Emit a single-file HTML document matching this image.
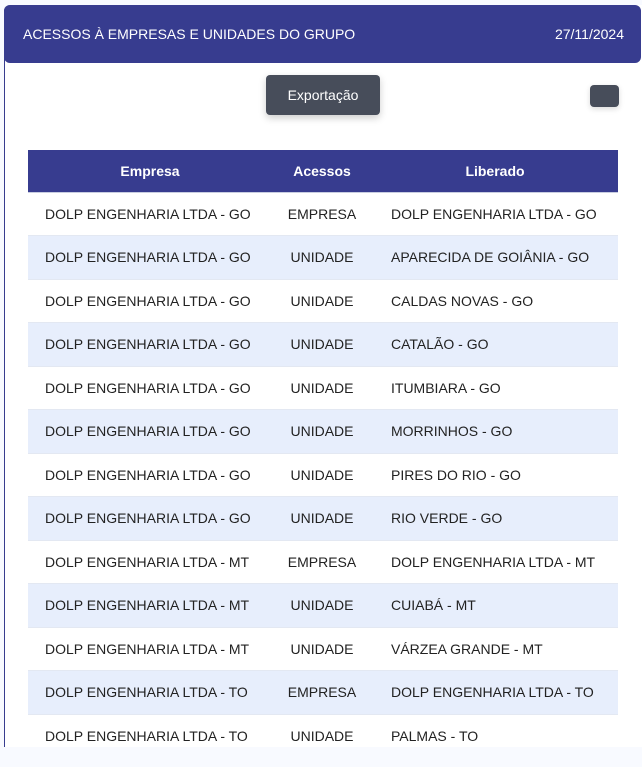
<!DOCTYPE html>
<html><head><meta charset="utf-8"><style>
*{margin:0;padding:0;box-sizing:border-box}
body{width:642px;height:767px;background:#f8faff;font-family:"Liberation Sans",sans-serif;position:relative;overflow:hidden}
.card{position:absolute;left:4px;top:5px;width:644px;height:742px;background:#fff;border-left:1px solid #373c8f;border-radius:6px 0 0 0}
.hdr{position:absolute;left:4px;top:5px;width:637px;height:58px;background:#373c8f;border-radius:6px;color:#fff;font-size:14px}
.hdr .t{position:absolute;left:19px;top:21px}
.hdr .d{position:absolute;right:17px;top:21px}
.btn{position:absolute;left:266px;top:75px;width:114px;height:40px;background:#474d5a;border-radius:4px;color:#fff;font-size:14px;text-align:center;line-height:40px;box-shadow:0 3px 8px rgba(0,0,0,.2)}
.sb{position:absolute;left:590px;top:85px;width:29px;height:22px;background:#474d5a;border-radius:4px;box-shadow:0 2px 6px rgba(0,0,0,.15)}
table{position:absolute;left:28px;top:150px;width:590px;border-collapse:collapse;font-size:14px;color:#222}
th{background:#373c8f;color:#fff;font-weight:bold;height:42px;text-align:center;border-bottom:1px solid #c8cde0}
td{height:43.5px;border-bottom:1px solid #e3e8f2}
td.a{width:244px;padding-left:17px}
td.b{width:100px;text-align:center}
td.c{padding-left:19px}
tr.s td{background:#e7eefc}
</style></head><body>
<div class="card"></div>
<div class="hdr"><span class="t">ACESSOS À EMPRESAS E UNIDADES DO GRUPO</span><span class="d">27/11/2024</span></div>
<div class="btn">Exportação</div>
<div class="sb"></div>
<table>
<tr><th style="width:244px">Empresa</th><th style="width:100px">Acessos</th><th>Liberado</th></tr>
<tr><td class="a">DOLP ENGENHARIA LTDA - GO</td><td class="b">EMPRESA</td><td class="c">DOLP ENGENHARIA LTDA - GO</td></tr>
<tr class="s"><td class="a">DOLP ENGENHARIA LTDA - GO</td><td class="b">UNIDADE</td><td class="c">APARECIDA DE GOIÂNIA - GO</td></tr>
<tr><td class="a">DOLP ENGENHARIA LTDA - GO</td><td class="b">UNIDADE</td><td class="c">CALDAS NOVAS - GO</td></tr>
<tr class="s"><td class="a">DOLP ENGENHARIA LTDA - GO</td><td class="b">UNIDADE</td><td class="c">CATALÃO - GO</td></tr>
<tr><td class="a">DOLP ENGENHARIA LTDA - GO</td><td class="b">UNIDADE</td><td class="c">ITUMBIARA - GO</td></tr>
<tr class="s"><td class="a">DOLP ENGENHARIA LTDA - GO</td><td class="b">UNIDADE</td><td class="c">MORRINHOS - GO</td></tr>
<tr><td class="a">DOLP ENGENHARIA LTDA - GO</td><td class="b">UNIDADE</td><td class="c">PIRES DO RIO - GO</td></tr>
<tr class="s"><td class="a">DOLP ENGENHARIA LTDA - GO</td><td class="b">UNIDADE</td><td class="c">RIO VERDE - GO</td></tr>
<tr><td class="a">DOLP ENGENHARIA LTDA - MT</td><td class="b">EMPRESA</td><td class="c">DOLP ENGENHARIA LTDA - MT</td></tr>
<tr class="s"><td class="a">DOLP ENGENHARIA LTDA - MT</td><td class="b">UNIDADE</td><td class="c">CUIABÁ - MT</td></tr>
<tr><td class="a">DOLP ENGENHARIA LTDA - MT</td><td class="b">UNIDADE</td><td class="c">VÁRZEA GRANDE - MT</td></tr>
<tr class="s"><td class="a">DOLP ENGENHARIA LTDA - TO</td><td class="b">EMPRESA</td><td class="c">DOLP ENGENHARIA LTDA - TO</td></tr>
<tr><td class="a">DOLP ENGENHARIA LTDA - TO</td><td class="b">UNIDADE</td><td class="c">PALMAS - TO</td></tr>
</table>
<div style="position:absolute;left:0;top:747px;width:642px;height:20px;background:#f8faff"></div>
</body></html>
